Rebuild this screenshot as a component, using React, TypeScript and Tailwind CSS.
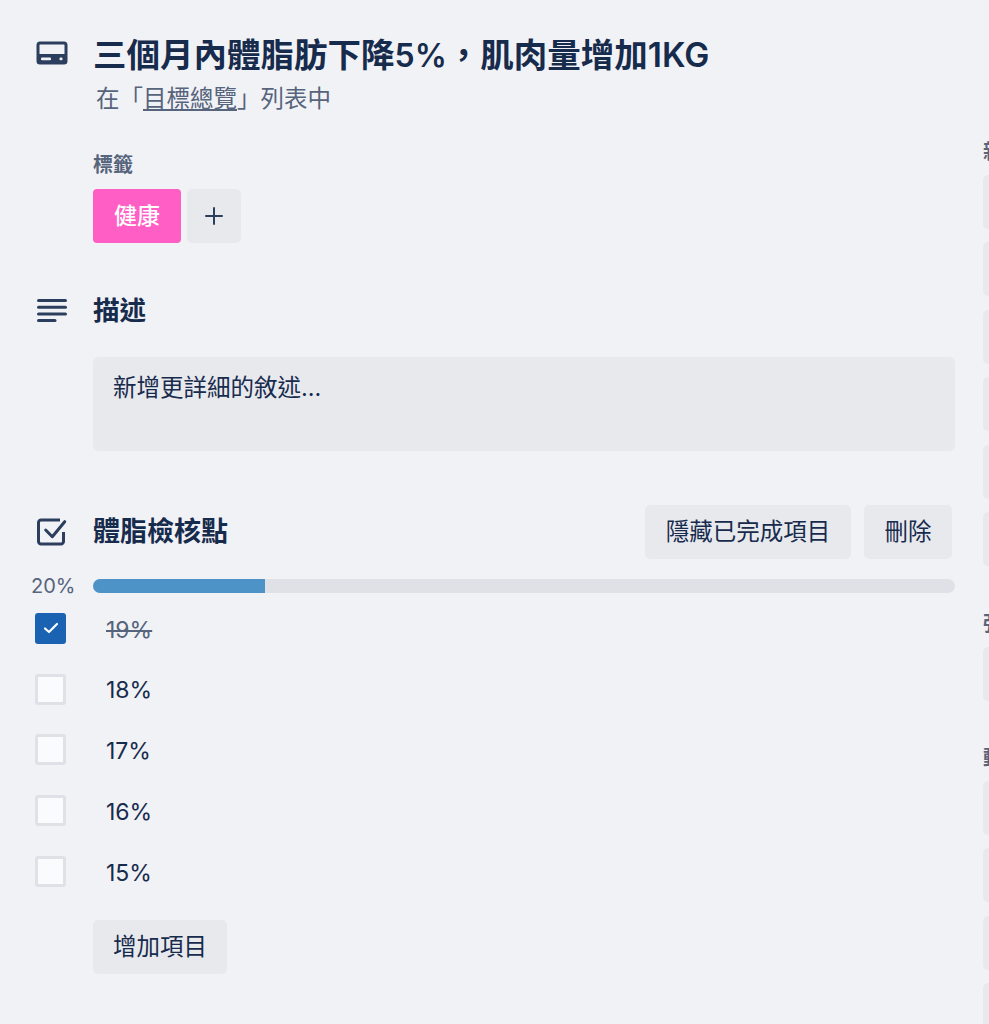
import React from 'react';

const font = "font-['Inter','Noto_Sans_CJK_TC',sans-serif]";

const CardIcon = () => (
  <svg width="32" height="24" viewBox="0 0 32 24" className="text-[#2c3e5d]">
    <path fillRule="evenodd" fill="currentColor" d="M4 0.5h24a3.5 3.5 0 0 1 3.5 3.5v16A3.5 3.5 0 0 1 28 23.5H4a3.5 3.5 0 0 1-3.5-3.5V4A3.5 3.5 0 0 1 4 0.5Zm-.5 3.5V13h25V4a.5.5 0 0 0-.5-.5H4a.5.5 0 0 0-.5.5Z" />
    <rect x="5" y="16.5" width="10" height="2.8" rx="1" fill="#f1f2f6" />
    <rect x="23.5" y="16.5" width="3" height="2.8" rx="1" fill="#f1f2f6" />
  </svg>
);

const DescIcon = () => (
  <svg width="32" height="26" viewBox="0 0 32 26" className="text-[#2c3e5d]">
    <rect x="1" y="1" width="30" height="3" rx="1.5" fill="currentColor" />
    <rect x="1" y="7.7" width="30" height="3" rx="1.5" fill="currentColor" />
    <rect x="1" y="14.4" width="30" height="3" rx="1.5" fill="currentColor" />
    <rect x="1" y="21" width="19.5" height="3" rx="1.5" fill="currentColor" />
  </svg>
);

const ChecklistIcon = () => (
  <svg width="30" height="28" viewBox="0 0 30 28" fill="none" stroke="#2c3e5d" strokeWidth="3" className="shrink-0">
    <path d="M23 2H4a2.5 2.5 0 0 0-2.500 2.500v19A2.500 2.500 0 0 0 4 26h20a2.500 2.500 0 0 0 2.500-2.500V14" />
    <path d="M8.700 12 15.300 18.700 27.700 3.700" strokeLinecap="round" strokeLinejoin="round" />
  </svg>
);

const CheckRow: React.FC<{ label: string; done?: boolean }> = ({ label, done }) => (
  <div className="flex h-[60.75px] items-center">
    {done ? (
      <div className="ml-[35px] flex h-[31px] w-[31px] items-center justify-center rounded-[3px] bg-[#1a62b2]">
        <svg width="16" height="12" viewBox="0 0 16 12" fill="none" stroke="#fff" strokeWidth="2.2" strokeLinecap="round" strokeLinejoin="round">
          <path d="M2 6.500 6 10l8-8" />
        </svg>
      </div>
    ) : (
      <div className="ml-[35px] h-[31px] w-[31px] rounded-[3px] border-[3px] border-[#dfe1e6] bg-[#fafbfc]" />
    )}
    <span className={`mt-[3px] ml-[40px] text-[23px] ${done ? 'text-[#56647c] line-through' : 'text-[#172b4d]'}`}>{label}</span>
  </div>
);

const Button: React.FC<{ label: string; className?: string }> = ({ label, className }) => (
  <button className={`h-[54px] rounded-[5px] bg-[#e8e9ed] text-[23.5px] text-[#172b4d] ${className ?? ''}`}>{label}</button>
);

const SideGroup: React.FC<{ title: string; count: number; className?: string }> = ({ title, count, className }) => (
  <div className={className}>
    <h3 className="h-[24px] whitespace-nowrap text-[20px] leading-[24px] font-semibold text-[#56647c]">{title}</h3>
    <div className="mt-[11px] flex flex-col gap-[13.4px]">
      {Array.from({ length: count }).map((_, i) => (
        <div key={i} className="h-[54px] w-[250px] rounded-[5px] bg-[#e8e9ed]" />
      ))}
    </div>
  </div>
);

export default function App() {
  return (
    <div className={`flex h-screen w-[989px] overflow-hidden bg-[#f1f2f6] ${font}`}>
      <main className="w-[983px] shrink-0">
        <div className="flex pt-[32px]">
          <div className="ml-[36px] mt-[9px] w-[57px] shrink-0"><CardIcon /></div>
          <div>
            <h1 className="text-[33.5px] leading-[46px] font-semibold whitespace-nowrap text-[#172b4d]">三個月內體脂肪下降<span className="text-[32px]">5%</span>，肌肉量增加1KG</h1>
            <p className="mt-[5px] ml-[3px] text-[23.5px] leading-[30px] text-[#56647c]">在「<span className="underline">目標總覽</span>」列表中</p>
          </div>
        </div>

        <div className="mt-[39px] ml-[93px]">
          <h3 className="text-[20px] leading-[24px] font-semibold text-[#56647c]">標籤</h3>
          <div className="mt-[12px] flex gap-[6px]">
            <div className="flex h-[54px] w-[88px] items-center justify-center rounded-[4px] bg-[#ff5ec4] text-[23px] font-medium text-white">健康</div>
            <button className="flex h-[54px] w-[54px] items-center justify-center rounded-[5px] bg-[#e8e9ed]">
              <svg width="18" height="18" viewBox="0 0 18 18" fill="none" stroke="#2c3e5d" strokeWidth="2" strokeLinecap="round">
                <path d="M9 1v16M1 9h16" />
              </svg>
            </button>
          </div>
        </div>

        <div className="mt-[41px] flex h-[54px] items-center">
          <div className="ml-[36px] w-[57px] shrink-0"><DescIcon /></div>
          <h2 className="text-[26.5px] font-semibold text-[#172b4d]">描述</h2>
        </div>
        <div className="mt-[19px] ml-[93px] h-[94px] w-[862px] rounded-[5px] bg-[#e8e9ed] px-[20px] py-[15px] text-[23.5px] leading-[32px] text-[#172b4d]">新增更詳細的敘述...</div>

        <div className="mt-[54px] flex items-center">
          <div className="ml-[37px] w-[56px] shrink-0"><ChecklistIcon /></div>
          <h2 className="text-[27px] font-semibold text-[#172b4d]">體脂檢核點</h2>
          <div className="mr-[31px] ml-auto flex gap-[13px]">
            <Button label="隱藏已完成項目" className="w-[206px]" />
            <Button label="刪除" className="w-[88px]" />
          </div>
        </div>

        <div className="mt-[17px] flex items-center">
          <span className="ml-[31px] w-[62px] text-[20px] leading-[20px] text-[#56647c]">20%</span>
          <div className="h-[14px] w-[862px] overflow-hidden rounded-full bg-[#dfe1e6]">
            <div className="h-full w-[20%] bg-[#4d93c8]" />
          </div>
        </div>

        <div className="mt-[2px]">
          <CheckRow label="19%" done />
          <CheckRow label="18%" />
          <CheckRow label="17%" />
          <CheckRow label="16%" />
          <CheckRow label="15%" />
        </div>

        <Button label="增加項目" className="mt-[18px] ml-[93px] w-[134px]" />
      </main>

      <aside className="shrink-0 pt-[140px]">
        <SideGroup title="新增至卡片" count={6} />
        <SideGroup title="強化功能" count={1} className="mt-[46px]" />
        <SideGroup title="動作" count={4} className="mt-[45px]" />
      </aside>
    </div>
  );
}
